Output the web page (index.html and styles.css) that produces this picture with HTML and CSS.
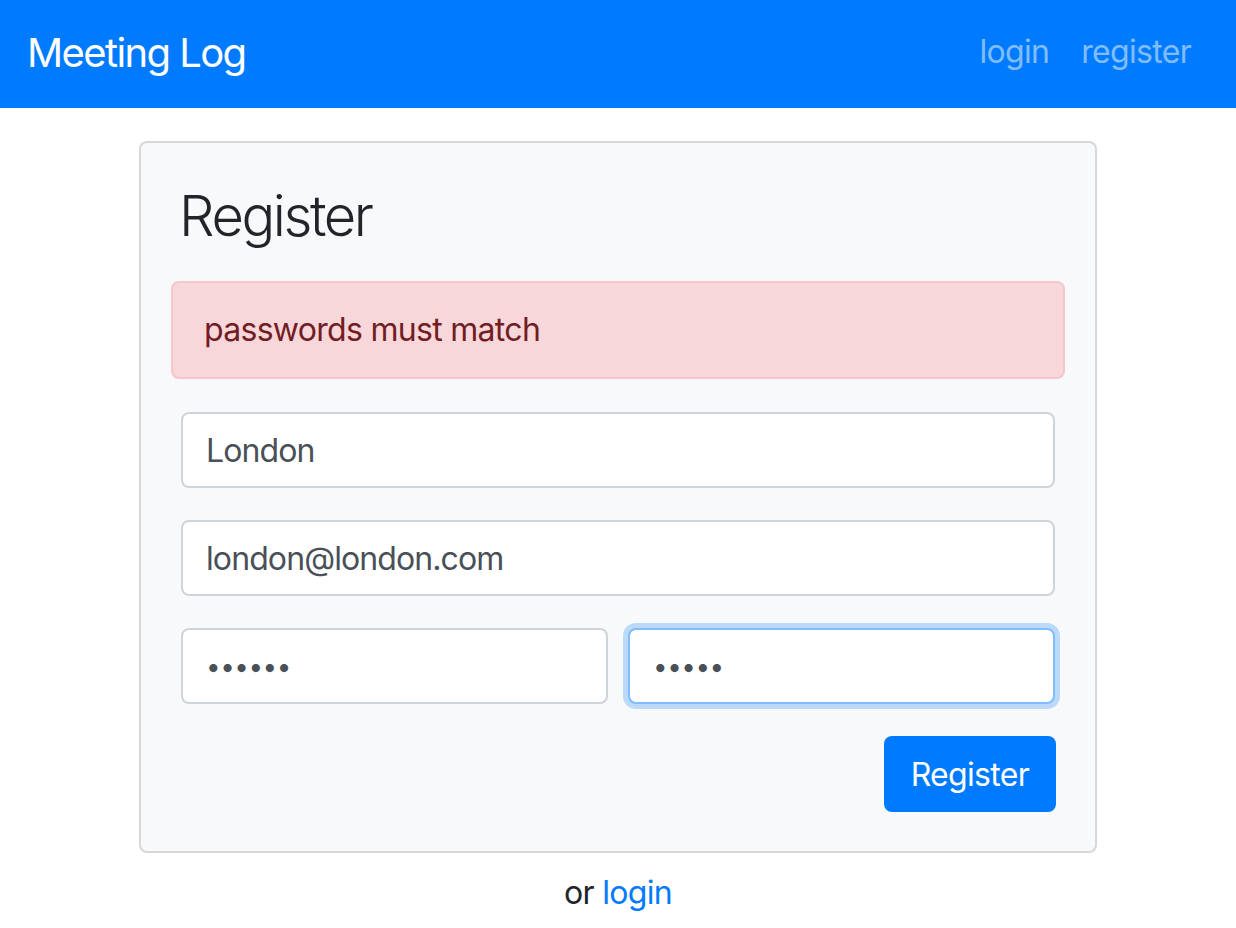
FILE: index.html
```html
<!DOCTYPE html>
<html lang="en">
<head>
<meta charset="utf-8">
<title>Meeting Log</title>
<link rel="stylesheet" href="styles.css">
</head>
<body>
<nav class="navbar">
  <a class="brand" href="#">Meeting Log</a>
  <div class="nav-links">
    <a class="nav-link" href="#">login</a>
    <a class="nav-link" href="#">register</a>
  </div>
</nav>
<main class="main">
  <section class="card">
    <h1 class="card-title">Register</h1>
    <div class="alert">passwords must match</div>
    <form class="form">
      <div class="form-row">
        <input class="form-control" type="text" value="London">
      </div>
      <div class="form-row">
        <input class="form-control" type="email" value="london@london.com">
      </div>
      <div class="form-row form-row-split">
        <input class="form-control form-password" type="password" value="123456">
        <input class="form-control form-password is-focus" type="password" value="12345">
      </div>
      <div class="form-actions">
        <button class="btn" type="button">Register</button>
      </div>
    </form>
  </section>
  <p class="alt">or <a href="#" class="alt-link">login</a></p>
</main>
</body>
</html>
```

FILE: styles.css
```css
* { box-sizing: border-box; }

body {
  margin: 0;
  font-family: Inter, "Noto Sans", "Liberation Sans", sans-serif;
  color: #212529;
  background: #fff;
}

.navbar {
  height: 108px;
  background: #007bff;
  display: flex;
  align-items: center;
  justify-content: space-between;
  padding: 0 29px 0 27px;
}

.brand {
  font-size: 40px;
  letter-spacing: -1.6px;
  color: #fff;
  text-decoration: none;
  margin-bottom: 4px;
}

.nav-links {
  display: flex;
  margin-bottom: 5px;
}

.nav-link {
  font-size: 32px;
  letter-spacing: -0.7px;
  color: #80bdff;
  text-decoration: none;
  padding: 0 16px;
}

.main {
  padding-top: 33px;
}

.card {
  width: 958px;
  margin: 0 auto;
  background: #f8f9fa;
  border: 2px solid rgba(0, 0, 0, 0.13);
  border-radius: 8px;
  padding: 30px;
}

.card-title {
  margin: 10px 0 31px;
  padding-left: 8px;
  font-size: 56px;
  font-weight: 300;
  letter-spacing: -2.4px;
  line-height: 1.2;
  color: #212529;
}

.alert {
  background: #f8d7da;
  border: 2px solid #f5c6cb;
  border-radius: 8px;
  color: #721c24;
  font-size: 32px;
  letter-spacing: -0.7px;
  line-height: 48px;
  padding: 23px 31px;
  margin-bottom: 23px;
}

.form {
  padding: 10px 10px 9px;
}

.form-row {
  margin-bottom: 32px;
}

.form-row-split {
  display: grid;
  grid-template-columns: 1fr 1fr;
  gap: 20px;
}

.form-control {
  display: block;
  width: 100%;
  height: 76px;
  border: 2px solid #ced4da;
  border-radius: 8px;
  background: #fff;
  padding: 0 23px;
  font-family: inherit;
  font-size: 32px;
  letter-spacing: -0.9px;
  color: #495057;
  outline: none;
}

.form-password {
  font-size: 26px;
  letter-spacing: -0.5px;
}

.form-control.is-focus {
  border-color: #80bdff;
  box-shadow: 0 0 0 5px rgba(0, 123, 255, 0.25);
}

.form-actions {
  display: flex;
  justify-content: flex-end;
}

.btn {
  height: 76px;
  padding: 0 27px;
  margin-right: -1px;
  border: none;
  border-radius: 8px;
  background: #007bff;
  color: #fff;
  font-family: inherit;
  font-size: 32px;
  letter-spacing: -0.7px;
  cursor: pointer;
}

.alt {
  margin: 16px 0 0;
  text-align: center;
  font-size: 32px;
  letter-spacing: -0.7px;
  line-height: 48px;
}

.alt-link {
  color: #007bff;
  text-decoration: none;
}
```
